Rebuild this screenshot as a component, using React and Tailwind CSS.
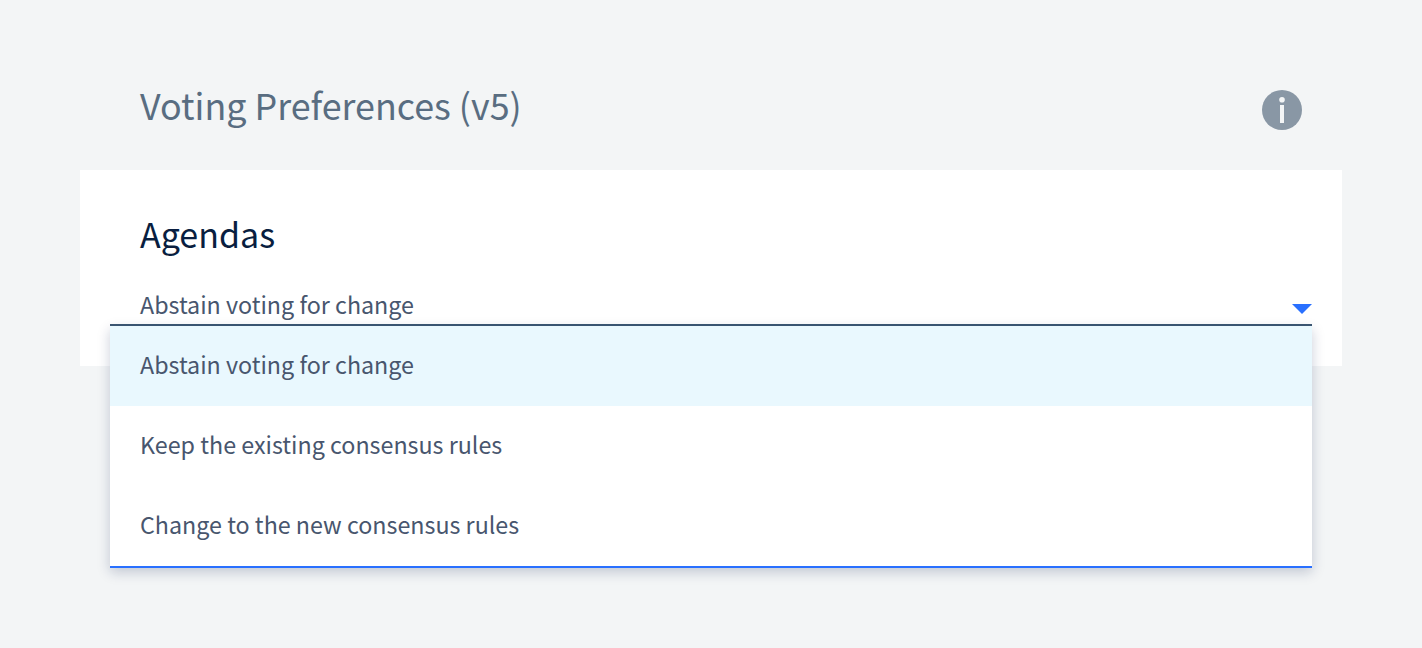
const options = [
  "Abstain voting for change",
  "Keep the existing consensus rules",
  "Change to the new consensus rules",
];

export default function App() {
  return (
    <main className="h-[648px] w-[1422px] overflow-hidden bg-[#f3f5f6] px-20 pt-[70px] font-['Noto_Sans_CJK_SC',sans-serif]">
      <header className="flex h-[100px] items-start justify-between pr-10 pl-[60px]">
        <h1 className="mt-1 text-[35.85px] leading-[60px] text-[#596d81]">Voting Preferences (v5)</h1>
        <svg className="mt-5" width="40" height="40" viewBox="0 0 40 40">
          <circle cx="20" cy="20" r="20" fill="#8997a5" />
          <circle cx="20" cy="9.7" r="2.8" fill="#f3f5f6" />
          <path d="M18 15h4v18h-4z" fill="#f3f5f6" />
        </svg>
      </header>
      <section className="h-[196px] bg-white px-[30px] pt-[38px]">
        <h2 className="pl-[30px] text-[34px] leading-[52px] text-[#091e40]">Agendas</h2>
        <div className="relative mt-6">
          <div className="flex h-[42px] items-center justify-between border-b-2 border-[#3d5873] pl-[30px] text-[23.28px] leading-10 text-[#48566e]">
            <span>{options[0]}</span>
            <svg className="mt-[10px]" width="20" height="10">
              <path d="M0 0h20L10 10z" fill="#2970ff" />
            </svg>
          </div>
          <ul className="absolute top-[42px] right-0 left-0 border-b-2 border-[#2970ff] bg-white text-[23.28px] text-[#48566e] shadow-[0_4px_12px_rgba(14,30,80,0.22)]">
            {options.map((label) => (
              <li key={label} className="flex h-20 items-center pb-1 pl-[30px] first:bg-[#e9f8fe]">
                {label}
              </li>
            ))}
          </ul>
        </div>
      </section>
    </main>
  );
}
